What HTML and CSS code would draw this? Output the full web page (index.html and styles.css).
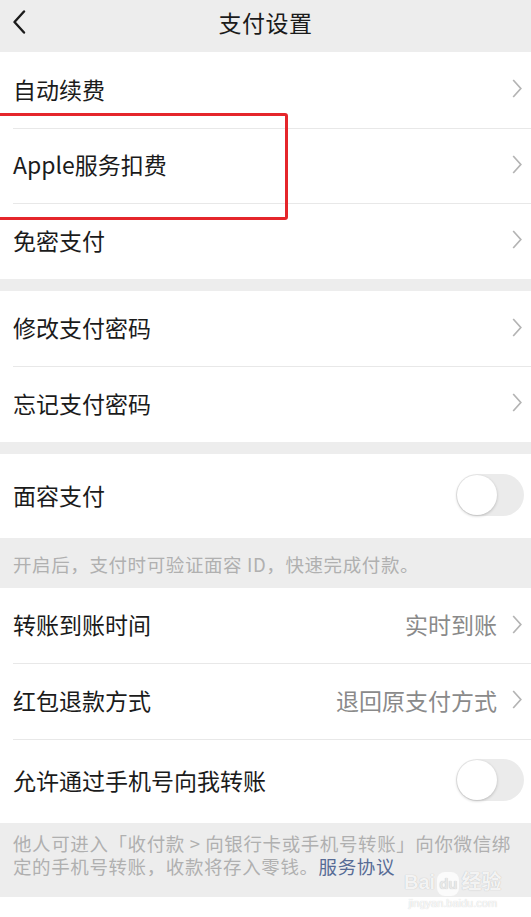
FILE: index.html
```html
<!DOCTYPE html>
<html lang="zh-CN">
<head>
  <meta charset="UTF-8">
  <meta name="viewport" content="width=device-width, initial-scale=1.0">
  <title>支付设置</title>
  <link rel="stylesheet" href="styles.css">
</head>
<body>
  <div class="page">
    <header class="nav-bar">
      <svg class="back" width="14" height="24" viewBox="0 0 14 24">
        <path d="M12 1.5 L2.5 12 L12 22.5" fill="none" stroke="#1b1b1b" stroke-width="2.4" stroke-linecap="round" stroke-linejoin="round"/>
      </svg>
      <h1>支付设置</h1>
    </header>

    <section class="group first">
      <div class="cell"><span class="label">自动续费</span><svg class="arrow" viewBox="0 0 10 19"><path d="M1.2 1 L8.8 9.5 L1.2 18"/></svg></div>
      <div class="cell"><span class="label">Apple服务扣费</span><svg class="arrow" viewBox="0 0 10 19"><path d="M1.2 1 L8.8 9.5 L1.2 18"/></svg></div>
      <div class="cell"><span class="label">免密支付</span><svg class="arrow" viewBox="0 0 10 19"><path d="M1.2 1 L8.8 9.5 L1.2 18"/></svg></div>
    </section>

    <section class="group">
      <div class="cell"><span class="label">修改支付密码</span><svg class="arrow" viewBox="0 0 10 19"><path d="M1.2 1 L8.8 9.5 L1.2 18"/></svg></div>
      <div class="cell"><span class="label">忘记支付密码</span><svg class="arrow" viewBox="0 0 10 19"><path d="M1.2 1 L8.8 9.5 L1.2 18"/></svg></div>
    </section>

    <section class="group">
      <div class="cell switch-cell"><span class="label">面容支付</span><span class="switch"></span></div>
    </section>
    <p class="tip tip-short">开启后，支付时可验证面容 ID，快速完成付款。</p>

    <section class="group flush">
      <div class="cell"><span class="label">转账到账时间</span><span class="value">实时到账</span><svg class="arrow" viewBox="0 0 10 19"><path d="M1.2 1 L8.8 9.5 L1.2 18"/></svg></div>
      <div class="cell"><span class="label">红包退款方式</span><span class="value">退回原支付方式</span><svg class="arrow" viewBox="0 0 10 19"><path d="M1.2 1 L8.8 9.5 L1.2 18"/></svg></div>
      <div class="cell switch-cell"><span class="label">允许通过手机号向我转账</span><span class="switch"></span></div>
    </section>
    <p class="tip tip-long">他人可进入「收付款 &gt; 向银行卡或手机号转账」向你微信绑<br>定的手机号转账，收款将存入零钱。<a href="#">服务协议</a></p>
    <div class="bottom"></div>

    <div class="highlight"></div>
    <div class="watermark">
      <div class="wm-logo">Bai<span class="wm-du">du</span>经验</div>
      <div class="wm-url">jingyan.baidu.com</div>
    </div>
  </div>
</body>
</html>
```

FILE: styles.css
```css
body {
  margin: 0;
  padding: 0;
  background-color: #fff;
  font-family: "Noto Sans CJK SC", "Noto Sans", sans-serif;
  color: #1b1b1b;
}

.page {
  position: relative;
  width: 531px;
  height: 917px;
  background-color: #ededed;
  overflow: hidden;
}

/* Top bar */
.nav-bar {
  height: 52px;
  box-sizing: border-box;
  padding-bottom: 8px;
  display: flex;
  align-items: center;
  justify-content: center;
  position: relative;
  background-color: #ededed;
}

.nav-bar h1 {
  margin: 0;
  font-size: 23px;
  font-weight: normal;
  letter-spacing: 0.5px;
  line-height: 30px;
}

.back {
  position: absolute;
  left: 12px;
  top: 10px;
}

/* List groups */
.group {
  background-color: #fff;
  margin-top: 12px;
}

.group.first,
.group.flush {
  margin-top: 0;
}

.cell {
  height: 75.5px;
  box-sizing: border-box;
  padding: 0 9px 2px 13px;
  display: flex;
  align-items: center;
  position: relative;
  font-size: 23px;
}

.cell + .cell::before {
  content: "";
  position: absolute;
  left: 13px;
  right: 0;
  top: 0;
  border-top: 1px solid #e8e8e8;
}

.label {
  flex: 1;
}

.value {
  color: #8a8a8a;
  margin-right: 15px;
}

.arrow {
  width: 10px;
  height: 19px;
  fill: none;
  stroke: #b4b4b4;
  stroke-width: 1.7;
}

.switch-cell {
  height: 84px;
  padding-right: 7px;
}

.switch {
  width: 68px;
  height: 42px;
  border-radius: 21px;
  background-color: #ebebeb;
  position: relative;
}

.switch::after {
  content: "";
  position: absolute;
  left: 1px;
  top: 1px;
  width: 40px;
  height: 40px;
  border-radius: 50%;
  background-color: #fff;
  box-shadow: 0 1px 3px rgba(0, 0, 0, 0.22);
}

/* Hints under groups */
.tip {
  margin: 0;
  color: #b0b0b0;
  font-size: 18.5px;
  letter-spacing: 0.6px;
  padding: 0 13px;
}

.tip-short {
  height: 50px;
  line-height: 52px;
}

.tip-long {
  padding-top: 9px;
  padding-bottom: 19px;
  line-height: 23px;
}

.tip a {
  color: #576b95;
  text-decoration: none;
}

.bottom {
  height: 40px;
  background-color: #fff;
}

/* Red annotation box */
.highlight {
  position: absolute;
  left: -6px;
  top: 113px;
  width: 288px;
  height: 101px;
  border: 3px solid #e5262b;
  border-radius: 3px;
}

/* Baidu watermark */
.watermark {
  position: absolute;
  left: 404px;
  top: 870px;
  text-align: center;
  color: rgba(255, 255, 255, 0.85);
  text-shadow: 0 0 1px rgba(0, 0, 0, 0.25);
  font-family: "Liberation Sans", "Noto Sans CJK SC", sans-serif;
}

.wm-logo {
  font-size: 20px;
  font-weight: bold;
  line-height: 24px;
}

.wm-du {
  display: inline-block;
  margin: 0 2px;
  padding: 0 2px;
  font-size: 15px;
  border-radius: 8px;
  background-color: rgba(255, 255, 255, 0.75);
  color: #e8e8e8;
}

.wm-url {
  font-size: 11px;
  line-height: 14px;
  color: rgba(255, 255, 255, 0.9);
}
```
